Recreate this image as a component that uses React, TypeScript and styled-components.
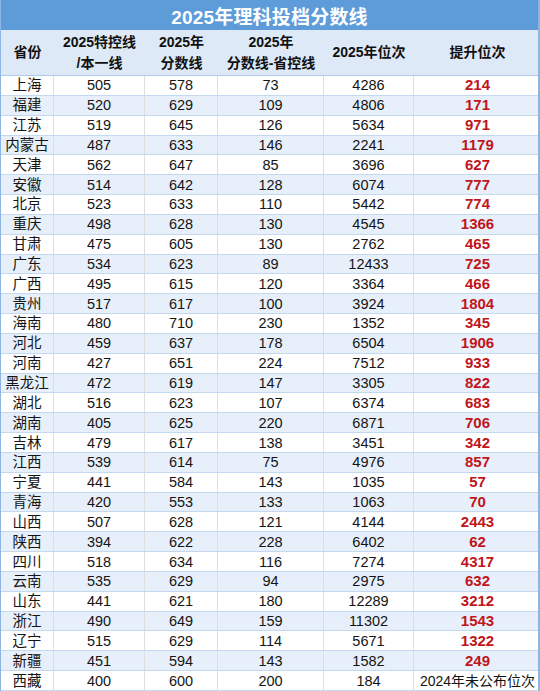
import React from "react";
import styled, { createGlobalStyle } from "styled-components";

const Global = createGlobalStyle`
  html, body { margin: 0; padding: 0; background: #ffffff; }
  body { font-family: "Liberation Sans", "Noto Sans CJK SC", sans-serif; }
`;

const COLS = "53px 91px 73px 106px 90px 127px";

const Sheet = styled.div`
  width: 540px;
  height: 691px;
  box-sizing: border-box;
  border-left: 1px solid #8fb6e3;
  border-right: 2px solid #8fb6e3;
  display: flex;
  flex-direction: column;
  overflow: hidden;
`;

const Title = styled.div`
  height: 30px;
  flex: none;
  background: #5d9bd9;
  color: #ffffff;
  font-size: 19px;
  font-weight: 700;
  display: flex;
  align-items: center;
  justify-content: center;
  letter-spacing: 0.2px;
`;

const HeaderRow = styled.div`
  height: 46px;
  flex: none;
  display: grid;
  grid-template-columns: ${COLS};
  background: #dde9f7;
  border-bottom: 1px solid #aecbea;
  box-sizing: border-box;
`;

const HeadCell = styled.div`
  display: flex;
  align-items: center;
  justify-content: center;
  text-align: center;
  font-size: 14px;
  font-weight: 700;
  line-height: 21px;
  color: #111;
`;

const Body = styled.div`
  flex: 1;
  min-height: 0;
  display: grid;
  grid-template-rows: repeat(31, minmax(0, 1fr));
`;

const Row = styled.div<{ $alt: boolean }>`
  display: grid;
  grid-template-columns: ${COLS};
  background: ${(p) => (p.$alt ? "#e7f0fa" : "#ffffff")};
  border-bottom: 1px solid #c4d9f0;
  box-sizing: border-box;
  min-height: 0;
  overflow: hidden;
`;

const Cell = styled.div<{ $red?: boolean; $last?: boolean }>`
  display: flex;
  align-items: center;
  justify-content: center;
  line-height: 18px;
  font-size: ${(p) => (p.$red ? "15px" : "14.5px")};
  font-weight: ${(p) => (p.$red ? 700 : 400)};
  color: ${(p) => (p.$red ? "#c0151b" : "#141414")};
  border-right: ${(p) => (p.$last ? "none" : "1px solid #dedede")};
  white-space: nowrap;
  min-height: 0;
`;

const NoteText = styled.span`
  font-size: 14px;
  font-weight: 400;
  color: #141414;
`;

type R = [string, number, number, number, number, number | null];

const rows: R[] = [
  ["上海", 505, 578, 73, 4286, 214],
  ["福建", 520, 629, 109, 4806, 171],
  ["江苏", 519, 645, 126, 5634, 971],
  ["内蒙古", 487, 633, 146, 2241, 1179],
  ["天津", 562, 647, 85, 3696, 627],
  ["安徽", 514, 642, 128, 6074, 777],
  ["北京", 523, 633, 110, 5442, 774],
  ["重庆", 498, 628, 130, 4545, 1366],
  ["甘肃", 475, 605, 130, 2762, 465],
  ["广东", 534, 623, 89, 12433, 725],
  ["广西", 495, 615, 120, 3364, 466],
  ["贵州", 517, 617, 100, 3924, 1804],
  ["海南", 480, 710, 230, 1352, 345],
  ["河北", 459, 637, 178, 6504, 1906],
  ["河南", 427, 651, 224, 7512, 933],
  ["黑龙江", 472, 619, 147, 3305, 822],
  ["湖北", 516, 623, 107, 6374, 683],
  ["湖南", 405, 625, 220, 6871, 706],
  ["吉林", 479, 617, 138, 3451, 342],
  ["江西", 539, 614, 75, 4976, 857],
  ["宁夏", 441, 584, 143, 1035, 57],
  ["青海", 420, 553, 133, 1063, 70],
  ["山西", 507, 628, 121, 4144, 2443],
  ["陕西", 394, 622, 228, 6402, 62],
  ["四川", 518, 634, 116, 7274, 4317],
  ["云南", 535, 629, 94, 2975, 632],
  ["山东", 441, 621, 180, 12289, 3212],
  ["浙江", 490, 649, 159, 11302, 1543],
  ["辽宁", 515, 629, 114, 5671, 1322],
  ["新疆", 451, 594, 143, 1582, 249],
  ["西藏", 400, 600, 200, 184, null],
];

export default function App() {
  return (
    <>
      <Global />
      <Sheet>
        <Title>2025年理科投档分数线</Title>
        <HeaderRow>
          <HeadCell>省份</HeadCell>
          <HeadCell>
            2025特控线
            <br />
            /本一线
          </HeadCell>
          <HeadCell>
            2025年
            <br />
            分数线
          </HeadCell>
          <HeadCell>
            2025年
            <br />
            分数线-省控线
          </HeadCell>
          <HeadCell>2025年位次</HeadCell>
          <HeadCell>提升位次</HeadCell>
        </HeaderRow>
        <Body>
          {rows.map((r, i) => (
            <Row key={r[0]} $alt={i % 2 === 1}>
              <Cell>{r[0]}</Cell>
              <Cell>{r[1]}</Cell>
              <Cell>{r[2]}</Cell>
              <Cell>{r[3]}</Cell>
              <Cell>{r[4]}</Cell>
              {r[5] === null ? (
                <Cell $last>
                  <NoteText>2024年未公布位次</NoteText>
                </Cell>
              ) : (
                <Cell $last $red>
                  {r[5]}
                </Cell>
              )}
            </Row>
          ))}
        </Body>
      </Sheet>
    </>
  );
}
